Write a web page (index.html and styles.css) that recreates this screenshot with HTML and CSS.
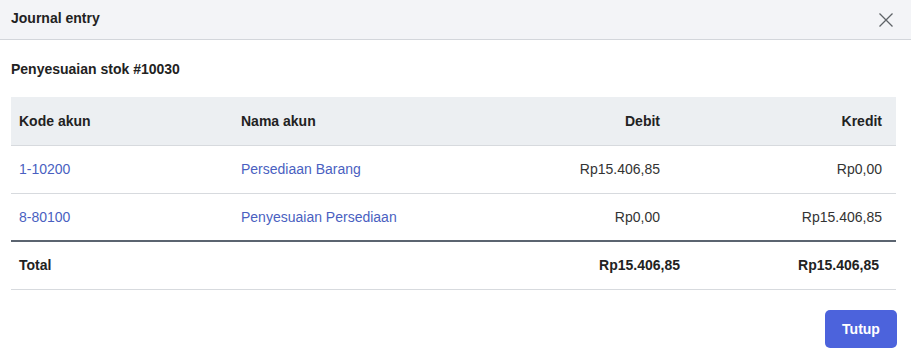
FILE: index.html
```html
<!DOCTYPE html>
<html lang="id">
<head>
    <meta charset="UTF-8">
    <meta name="viewport" content="width=device-width, initial-scale=1.0">
    <title>Journal entry</title>
    <link rel="stylesheet" href="styles.css">
</head>
<body>
    <div class="modal">
        <div class="modal-header">
            <h1>Journal entry</h1>
            <button class="close-btn" aria-label="Close">
                <svg width="16" height="16" viewBox="0 0 16 16">
                    <path d="M1.5 1.5 L14.5 14.5 M14.5 1.5 L1.5 14.5" stroke="#5f6368" stroke-width="1.3" fill="none"/>
                </svg>
            </button>
        </div>
        <div class="modal-body">
            <h2>Penyesuaian stok #10030</h2>
            <table class="journal">
                <colgroup>
                    <col class="col-code">
                    <col class="col-name">
                    <col class="col-debit">
                    <col class="col-kredit">
                </colgroup>
                <thead>
                    <tr>
                        <th>Kode akun</th>
                        <th>Nama akun</th>
                        <th class="num debit">Debit</th>
                        <th class="num">Kredit</th>
                    </tr>
                </thead>
                <tbody>
                    <tr>
                        <td><a href="#">1-10200</a></td>
                        <td><a href="#">Persediaan Barang</a></td>
                        <td class="num debit">Rp15.406,85</td>
                        <td class="num">Rp0,00</td>
                    </tr>
                    <tr>
                        <td><a href="#">8-80100</a></td>
                        <td><a href="#">Penyesuaian Persediaan</a></td>
                        <td class="num debit">Rp0,00</td>
                        <td class="num">Rp15.406,85</td>
                    </tr>
                </tbody>
                <tfoot>
                    <tr>
                        <td>Total</td>
                        <td></td>
                        <td class="num total-debit">Rp15.406,85</td>
                        <td class="num total-kredit">Rp15.406,85</td>
                    </tr>
                </tfoot>
            </table>
        </div>
        <div class="modal-footer">
            <button class="btn-primary">Tutup</button>
        </div>
    </div>
</body>
</html>
```

FILE: styles.css
```css
body {
    margin: 0;
    font-family: 'Liberation Sans', Arial, sans-serif;
    font-size: 14px;
    color: #222;
    background: #fff;
}

.modal {
    width: 911px;
}

.modal-header {
    height: 40px;
    box-sizing: border-box;
    background: #f3f4f7;
    border-bottom: 1px solid #d3d6db;
    display: flex;
    align-items: center;
    justify-content: space-between;
    padding: 0 17px 0 11px;
}

.modal-header h1 {
    margin: 0;
    font-size: 14px;
    font-weight: bold;
    color: #222;
    padding-bottom: 3px;
}

.close-btn {
    border: none;
    background: none;
    padding: 0;
    width: 16px;
    height: 16px;
    cursor: pointer;
    display: flex;
}

.modal-body {
    padding: 22px 15px 0 11px;
}

.modal-body h2 {
    margin: 0 0 20px;
    font-size: 14px;
    font-weight: bold;
    color: #222;
    line-height: 15px;
}

.journal {
    width: 100%;
    border-collapse: collapse;
    table-layout: fixed;
}

.col-code { width: 222px; }
.col-name { width: 220px; }
.col-debit { width: 228px; }
.col-kredit { width: 215px; }

.journal th,
.journal td {
    height: 48px;
    box-sizing: border-box;
    padding: 0 8px;
    text-align: left;
    border-bottom: 1px solid #d7dade;
    vertical-align: middle;
}

.journal th {
    background: #eceff2;
    font-weight: bold;
    color: #222;
}

.journal td {
    color: #333;
}

.journal .num {
    text-align: right;
    padding-right: 14px;
}

.journal .debit {
    padding-right: 21px;
}

.journal a {
    color: #4a5fc1;
    text-decoration: none;
}

.journal tbody tr:last-child td {
    border-bottom: 2px solid #5b6470;
}

.journal tfoot td {
    font-weight: bold;
    color: #222;
}

.journal .total-debit {
    padding-right: 1px;
}

.journal .total-kredit {
    padding-right: 17px;
}

.modal-footer {
    display: flex;
    justify-content: flex-end;
    padding: 20px 14px 0;
}

.btn-primary {
    background: #4c63dc;
    color: #fff;
    border: none;
    border-radius: 5px;
    width: 72px;
    height: 38px;
    font-family: 'Liberation Sans', Arial, sans-serif;
    font-size: 14px;
    font-weight: bold;
    cursor: pointer;
}
```
